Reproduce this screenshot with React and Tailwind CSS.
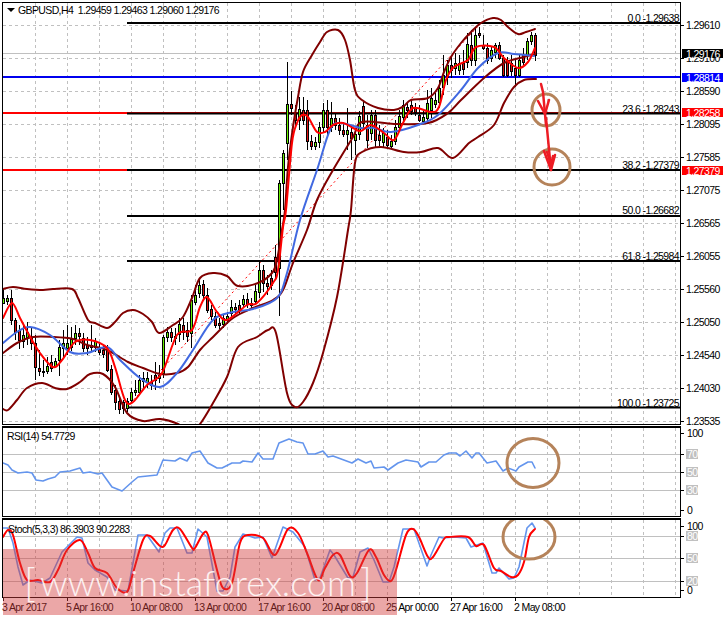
const chartFont = "font-['Liberation_Sans',Arial,sans-serif] text-[10.5px] leading-[10px] tracking-[-0.62px] text-black";

// high, body top, body bottom, low, up — page pixels, one bar every 4px from x=3.5
const bars = [
  [288,298,303,300,1],[295,298,301,305,1],[290,298,320,325,0],[318,320,332,340,0],[325,330,340,349,0],[325,335,341,348,1],[322,332,337,345,1],[328,337,343,350,0],
  [335,343,367,380,0],[350,368,371,376,0],[360,371,372,377,1],[357,366,371,374,1],[355,362,368,372,0],[358,361,366,368,1],[340,347,360,376,1],[330,343,348,358,1],
  [325,343,348,355,1],[327,339,347,351,1],[325,333,338,345,1],[328,333,336,345,0],[333,338,348,352,0],[337,345,348,355,0],[325,345,347,352,0],[338,341,347,352,1],
  [343,349,352,355,0],[345,350,354,358,0],[345,350,370,372,0],[365,369,392,395,0],[385,390,402,410,0],[397,401,409,414,0],[400,402,408,414,0],[398,401,408,412,1],
  [388,392,400,404,1],[380,390,392,396,1],[375,380,392,395,1],[372,378,381,390,1],[372,378,382,388,1],[375,382,385,390,0],[362,375,380,390,0],[365,375,378,383,1],
  [335,337,373,378,1],[327,332,337,342,1],[328,332,337,342,0],[328,336,338,345,0],[318,324,334,342,1],[318,325,332,340,0],[322,330,336,342,0],[295,300,333,348,1],
  [285,295,302,305,1],[278,285,293,298,1],[280,284,295,300,0],[288,295,310,313,0],[305,309,316,320,0],[312,316,325,328,0],[318,323,325,329,0],[315,318,324,328,1],
  [312,316,320,324,1],[300,307,313,318,1],[303,307,309,315,0],[300,305,310,314,0],[295,299,304,308,1],[293,299,304,308,0],[298,303,305,308,0],[285,291,301,305,1],
  [262,270,292,298,1],[265,270,283,292,0],[275,283,286,295,0],[270,278,285,290,0],[245,257,272,280,0],[180,183,268,316,1],[150,153,183,210,1],[62,104,143,160,1],
  [91,104,108,115,0],[105,113,120,125,0],[97,109,120,130,1],[97,110,120,125,0],[100,110,141,150,0],[135,141,146,150,0],[137,142,146,150,1],[122,127,142,148,1],
  [103,110,127,132,1],[100,110,127,135,0],[102,118,127,132,1],[113,118,125,130,0],[118,125,130,135,0],[122,130,134,137,0],[108,130,134,150,1],[126,132,138,160,0],
  [128,134,140,155,1],[111,116,134,140,1],[100,106,123,130,0],[115,125,140,148,0],[110,115,133,140,1],[110,115,140,148,0],[125,135,140,146,0],[128,133,142,148,1],
  [130,137,145,148,0],[135,141,146,149,1],[120,127,141,145,1],[110,116,127,132,1],[100,105,117,125,1],[103,107,110,118,0],[100,105,111,115,0],[103,108,112,116,0],
  [105,115,120,122,0],[111,117,121,124,1],[90,103,118,124,1],[88,98,110,118,1],[93,100,104,108,1],[80,88,102,108,1],[55,75,87,95,1],[60,65,77,85,1],
  [55,65,70,78,0],[53,63,68,75,1],[55,63,70,75,1],[50,63,69,75,0],[33,44,62,68,1],[30,45,60,66,0],[27,35,60,66,1],[27,33,35,38,0],
  [35,45,48,50,0],[43,48,60,64,0],[47,50,58,62,1],[43,45,52,58,1],[42,45,58,60,0],[55,58,75,77,0],[57,60,75,77,0],[55,63,71,76,0],
  [60,68,75,87,0],[55,60,75,77,1],[48,54,62,65,0],[38,41,55,60,1],[32,35,41,45,1],[33,35,55,61,0],
];

const upper = "3,289 13,287 27,289 43,290 53,289 72,289 78,298 88,320 95,323 107,328 115,322 123,313 133,310 143,314 152,322 159,333 173,325 183,317 192,298 200,278 213,273 227,276 238,286 258,283 272,273 277,260 282,230 285,210 288,167 293,127 298,97 303,72 312,55 320,42 327,32 338,30 345,40 350,60 355,90 362,100 378,108 394,110 404,106 411,100 428,98 438,88 444,72 451,57 461,43 471,32 481,23 493,18 501,20 508,27 518,34 526,32 535,29";
const middle = "3,353 17,343 33,337 53,337 73,339 87,345 107,350 128,362 143,368 160,374 177,373 188,367 200,350 213,337 233,318 253,308 273,300 283,290 293,263 307,230 317,200 333,170 353,137 362,122 394,124 428,123 448,113 461,100 484,78 504,63 524,57 535,54";
const lower = "3,409 8,410 17,400 27,388 42,383 55,388 67,389 80,382 90,374 103,374 115,387 127,413 143,421 160,419 178,424 190,432 200,424 213,403 227,377 238,347 257,337 268,330 276,333 287,393 295,407 303,402 313,383 323,353 337,297 348,230 351,210 355,163 362,152 381,147 404,152 421,152 438,148 453,158 469,143 478,137 494,125 504,103 514,87 524,80 536,79";
const fastMa = "3,318 12,303 20,318 28,333 40,353 53,367 62,360 75,342 90,340 107,348 115,367 125,400 133,402 147,385 162,373 177,335 192,330 200,307 207,297 217,312 227,320 247,305 257,303 273,283 278,270 283,227 286,210 292,143 297,123 302,115 308,117 317,132 325,132 333,125 343,123 353,128 361,131 371,125 384,133 394,140 403,123 413,108 431,112 439,107 446,80 454,67 468,60 476,47 494,47 504,58 518,68 528,62 535,48";
const slowMa = "3,343 17,332 30,327 50,335 70,352 87,353 107,347 120,360 140,378 160,387 177,373 193,350 213,320 233,312 253,309 277,298 287,273 300,220 317,170 330,130 340,123 361,128 374,128 391,132 418,125 438,115 461,90 478,68 498,53 514,54 534,56";

const rsiLine = "3,463 8,465 12,470 18,473 27,472 32,473 36,480 43,481 48,479 55,477 60,472 70,471 80,468 83,473 90,472 98,474 102,473 112,487 122,491 132,482 138,477 157,475 163,460 175,461 180,458 187,461 192,453 200,451 208,463 217,468 222,468 232,463 240,463 243,461 252,462 258,453 263,459 273,459 279,443 289,439 297,442 303,443 308,454 315,454 323,451 328,457 333,456 352,463 358,459 366,463 371,461 374,468 384,467 388,470 398,463 406,460 418,462 421,467 429,462 436,462 444,455 449,453 456,453 460,456 466,451 472,458 476,453 479,453 487,463 496,461 503,471 508,468 516,471 519,467 528,462 532,462 535,468";
const stochMain = "3,528 8,528 13,543 18,567 23,585 30,580 42,583 50,578 62,552 77,537 82,538 88,563 95,570 107,577 115,590 128,591 138,535 147,535 159,552 165,533 170,528 177,528 187,553 192,553 198,529 207,537 217,591 223,591 230,577 235,547 243,534 255,538 263,537 272,558 283,527 293,532 305,547 315,580 320,578 330,550 334,555 348,578 353,577 360,552 368,548 374,560 383,582 389,582 394,567 403,529 414,529 427,566 431,555 439,537 443,538 454,537 466,538 471,547 483,543 492,573 496,573 499,568 509,579 514,578 519,567 527,528 532,523 535,528";
const stochSignal = "3,537 8,530 13,535 20,563 27,580 38,580 50,582 58,570 67,550 80,540 88,553 95,568 107,573 117,588 127,592 133,573 143,540 150,536 160,546 165,545 173,530 180,529 192,548 195,548 203,534 208,535 217,570 223,588 232,583 240,543 248,535 263,538 275,555 288,529 298,533 307,553 318,580 325,568 333,555 340,555 350,576 357,573 369,550 376,557 384,575 391,581 396,570 406,535 413,529 419,537 428,557 433,557 444,539 449,537 468,537 476,546 484,545 494,568 501,571 511,577 518,575 524,562 529,537 535,529";

const priceRows = ["1.29610","1.29100","1.28590","1.28095","1.27585","1.27075","1.26565","1.26055","1.25560","1.25050","1.24540","1.24030","1.23535"];
const fibs = [
  { y: 23, label: "0.0 -1.29638", mid: 17.5 },
  { y: 113.5, label: "23.6 -1.28243", mid: 109 },
  { y: 170, label: "38.2 -1.27379", mid: 165 },
  { y: 216, label: "50.0 -1.26682", mid: 210 },
  { y: 261, label: "61.8 -1.25984", mid: 256 },
  { y: 407.5, label: "100.0 -1.23725", mid: 403 },
];
const tags = [
  { text: "1.29176", top: 49, cls: "bg-black" },
  { text: "1.28814", top: 73, cls: "bg-[#0000ff]" },
  { text: "1.28258", top: 108, cls: "bg-[#ff0000]" },
  { text: "1.27379", top: 166, cls: "bg-[#ff0000]" },
];
const dates = ["3 Apr 2017","5 Apr 16:00","10 Apr 08:00","13 Apr 00:00","17 Apr 16:00","20 Apr 08:00","25 Apr 00:00","27 Apr 16:00","2 May 08:00"];

// catmull-rom through the sampled points, the indicators are smooth curves
const smoothPath = (points) => {
  const p = points.split(" ").map((s) => s.split(",").map(Number));
  let d = `M${p[0][0]} ${p[0][1]}`;
  for (let i = 0; i < p.length - 1; i++) {
    const a = p[i - 1] || p[i];
    const b = p[i];
    const c = p[i + 1];
    const e = p[i + 2] || c;
    const c1x = b[0] + (c[0] - a[0]) / 6;
    const c1y = b[1] + (c[1] - a[1]) / 6;
    const c2x = c[0] - (e[0] - b[0]) / 6;
    const c2y = c[1] - (e[1] - b[1]) / 6;
    d += ` C${c1x} ${c1y} ${c2x} ${c2y} ${c[0]} ${c[1]}`;
  }
  return d;
};

const GridLines = ({ top, bottom }) => {
  const xs = Array.from({ length: 21 }, (_, i) => 35.5 + i * 32);
  const ys = [];
  for (let y = 25.5; y < 424; y += 33) if (y > top && y < bottom) ys.push(y);
  return (
    <g stroke="#c0c0c0" strokeWidth="1" strokeDasharray="3 3" fill="none">
      {xs.map((x) => <line key={x} x1={x} x2={x} y1={top} y2={bottom} />)}
      {ys.map((y) => <line key={y} x1={3} x2={680} y1={y} y2={y} />)}
    </g>
  );
};

const Candles = () => (
  <g shapeRendering="crispEdges">
    {bars.map(([high, top, bottom, low, up], i) => {
      const x = 3.5 + i * 4;
      return (
        <g key={i}>
          <line x1={x} x2={x} y1={high} y2={low} stroke="#000" />
          <rect x={x - 1} y={top} width={2} height={bottom - top} fill={up ? "#66ee00" : "#dd1111"} stroke="#000" />
        </g>
      );
    })}
  </g>
);

const Curve = ({ points, color, width = 2 }) => (
  <path d={smoothPath(points)} fill="none" stroke={color} strokeWidth={width} strokeLinecap="round" />
);

const Line = ({ points, color, width = 1.6 }) => (
  <polyline points={points} fill="none" stroke={color} strokeWidth={width} strokeLinejoin="round" strokeLinecap="round" />
);

const MainChart = () => (
  <svg viewBox="3 3 677 421" className="block w-[677px] h-[421px]">
    <GridLines top={3} bottom={424} />
    <line x1="3" x2="680" y1="53.5" y2="53.5" stroke="#c0c0c0" />
    <line x1="3" x2="680" y1="77" y2="77" stroke="#0000ee" strokeWidth="2" />
    <line x1="3" x2="680" y1="113" y2="113" stroke="#ff0000" strokeWidth="2" />
    <line x1="3" x2="680" y1="170" y2="170" stroke="#ff0000" strokeWidth="2" />
    <line x1="127" x2="481" y1="407" y2="23" stroke="#ff0000" strokeDasharray="2 3" />
    {fibs.map((f) => <line key={f.y} x1="127" x2="680" y1={f.y} y2={f.y} stroke="#000" strokeWidth="2" />)}
    <Candles />
    <Curve points={upper} color="#800000" />
    <Curve points={middle} color="#800000" />
    <Curve points={lower} color="#800000" />
    <Curve points={slowMa} color="#4169e1" />
    <Curve points={fastMa} color="#ff0000" />
    <ellipse cx="546" cy="110" rx="14" ry="16" fill="none" stroke="#b5835a" strokeWidth="3" />
    <ellipse cx="552" cy="167" rx="18" ry="18" fill="none" stroke="#b5835a" strokeWidth="3" />
    <g fill="none" stroke="#ed1c24" strokeWidth="2.5" strokeLinecap="round" strokeLinejoin="round">
      <path d="M541 84 L543 92 L546 125" />
      <path d="M538 101 L545 114 L549 100" />
      <path d="M546 118 L551 170" />
      <path d="M544 151 L551 170 L555 155" />
      <path d="M547 152 L551 165 L553 156" />
    </g>
  </svg>
);

const RsiChart = () => (
  <svg viewBox="3 428 677 88" className="block w-[677px] h-[88px]">
    <GridLines top={428} bottom={516} />
    {[454.5, 472.5, 490.5].map((y) => <line key={y} x1="3" x2="680" y1={y} y2={y} stroke="#c0c0c0" />)}
    <Line points={rsiLine} color="#6495ed" />
    <ellipse cx="533" cy="463" rx="26" ry="24.5" fill="none" stroke="#b5835a" strokeWidth="3" />
  </svg>
);

const StochChart = () => (
  <svg viewBox="3 520 677 77" className="block w-[677px] h-[77px]">
    <GridLines top={520} bottom={597} />
    {[536.5, 558.5, 581.5].map((y) => <line key={y} x1="3" x2="680" y1={y} y2={y} stroke="#c0c0c0" />)}
    <Line points={stochMain} color="#6495ed" />
    <Curve points={stochSignal} color="#ff0000" />
    <ellipse cx="529" cy="537" rx="26" ry="22" fill="none" stroke="#b5835a" strokeWidth="3" />
  </svg>
);

const Level = ({ text, top, silver }) => (
  <div className="absolute left-0 flex items-center gap-[2px]" style={{ top }}>
    <span className="w-[3px] h-px bg-black shrink-0" />
    <span className={silver ? "px-[1px] bg-[#c0c0c0] text-white" : "px-[1px]"}>{text}</span>
  </div>
);

export default function App() {
  return (
    <div className={`relative w-[723px] h-[618px] bg-white overflow-hidden pt-[2px] pl-[2px] ${chartFont}`}>
      {/* main window */}
      <div className="flex h-[423px]">
        <div className="relative box-content w-[677px] h-[421px] border border-black">
          <MainChart />
          <div className="absolute left-[4px] top-[2px] flex items-center gap-[3px] whitespace-pre">
            <span className="w-0 h-0 border-x-[4px] border-x-transparent border-t-[4px] border-t-black" />
            <span>GBPUSD,H4  1.29459 1.29463 1.29060 1.29176</span>
          </div>
          {fibs.map((f) => (
            <span key={f.label} className="absolute right-[1px]" style={{ top: f.mid - 8 }}>{f.label}</span>
          ))}
        </div>
        <div className="relative flex-1 flex flex-col pt-[18px]">
          {priceRows.map((p) => (
            <div key={p} className="h-[33px] flex items-start gap-[2px] shrink-0">
              <span className="w-[3px] h-px bg-black mt-[5px]" />
              <span>{p}</span>
            </div>
          ))}
          {tags.map((t) => (
            <span key={t.text} className={`absolute left-[1px] right-0 h-[9px] pl-[4px] flex items-center text-white ${t.cls}`} style={{ top: t.top - 2 }}>
              {t.text}
            </span>
          ))}
        </div>
      </div>

      {/* RSI */}
      <div className="flex mt-[1px]">
        <div className="relative box-content w-[677px] h-[88px] border-t-2 border-x border-b border-black">
          <RsiChart />
          <span className="absolute left-[4px] top-[3px]">RSI(14) 54.7729</span>
        </div>
        <div className="relative flex-1">
          <Level text="100" top={2} />
          <Level text="70" top={23} silver />
          <Level text="50" top={41} silver />
          <Level text="30" top={59} silver />
          <Level text="0" top={79} />
        </div>
      </div>

      {/* stochastic */}
      <div className="flex mt-[1px]">
        <div className="relative box-content w-[677px] h-[77px] border-t-2 border-x border-b border-black">
          <StochChart />
          <span className="absolute left-[5px] top-[4px]">Stoch(5,3,3) 86.3903 90.2283</span>
        </div>
        <div className="relative flex-1">
          <Level text="100" top={3} />
          <Level text="80" top={13} silver />
          <Level text="50" top={35} silver />
          <Level text="20" top={58} silver />
          <Level text="0" top={67} />
        </div>
      </div>

      {/* time axis */}
      <div className="flex h-[18px]">
        {dates.map((d) => (
          <div key={d} className="relative w-[64px] shrink-0 pt-[4px] whitespace-nowrap">
            <span className="absolute left-[1px] top-0 w-px h-[3px] bg-black" />
            <span>{d}</span>
          </div>
        ))}
      </div>

      {/* watermark */}
      <div className="absolute left-[3px] top-[549px] w-[394px] h-[66px] bg-[#d23c3c]/45 pointer-events-none flex items-start justify-between pl-[21px] pr-[25px] pt-[10px] text-white/85 font-['Lato',sans-serif] font-light tracking-normal">
        <span className="text-[40px] leading-[46px]">[</span>
        <span className="text-[36px] leading-[46px] whitespace-nowrap">www.instaforex.com</span>
        <span className="text-[40px] leading-[46px]">]</span>
      </div>
    </div>
  );
}
